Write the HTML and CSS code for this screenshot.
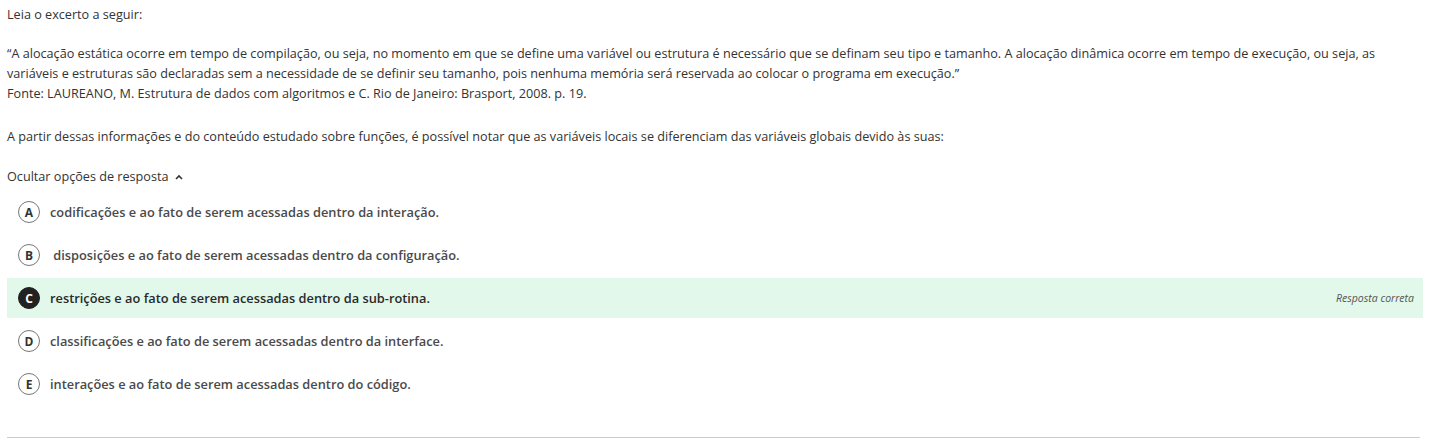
FILE: index.html
```html
<!DOCTYPE html>
<html lang="pt">
<head>
<meta charset="utf-8">
<link rel="stylesheet" href="styles.css">
</head>
<body>
<div class="question">
  <p class="intro">Leia o excerto a seguir:</p>
  <p class="quote">“A alocação estática ocorre em tempo de compilação, ou seja, no momento em que se define uma variável ou estrutura é necessário que se definam seu tipo e tamanho. A alocação dinâmica ocorre em tempo de execução, ou seja, as variáveis e estruturas são declaradas sem a necessidade de se definir seu tamanho, pois nenhuma memória será reservada ao colocar o programa em execução.”<br>Fonte: LAUREANO, M. Estrutura de dados com algoritmos e C. Rio de Janeiro: Brasport, 2008. p. 19.</p>
  <p class="prompt">A partir dessas informações e do conteúdo estudado sobre funções, é possível notar que as variáveis locais se diferenciam das variáveis globais devido às suas:</p>
  <div class="toggle">Ocultar opções de resposta <svg class="chev" width="8" height="6" viewBox="0 0 8 6"><path d="M1 5 L4 2 L7 5" fill="none" stroke="#333" stroke-width="1.6"/></svg></div>
  <ul class="options">
    <li class="opt"><span class="letter">A</span><span class="text">codificações e ao fato de serem acessadas dentro da interação.</span></li>
    <li class="opt"><span class="letter">B</span><span class="text">&nbsp;disposições e ao fato de serem acessadas dentro da configuração.</span></li>
    <li class="opt correct"><span class="letter">C</span><span class="text">restrições e ao fato de serem acessadas dentro da sub-rotina.</span><span class="tag">Resposta correta</span></li>
    <li class="opt"><span class="letter">D</span><span class="text">classificações e ao fato de serem acessadas dentro da interface.</span></li>
    <li class="opt"><span class="letter">E</span><span class="text">interações e ao fato de serem acessadas dentro do código.</span></li>
  </ul>
  <hr class="rule">
</div>
</body>
</html>
```

FILE: styles.css
```css
html, body {
  margin: 0;
  padding: 0;
  background: #fff;
}
body {
  font-family: "Open Sans", "DejaVu Sans", sans-serif;
  font-size: 12.65px;
  color: #333;
}
.question {
  padding: 4px 10px 0 7px;
}
.question p {
  margin: 0;
  line-height: 20px;
}
.intro {
  margin-bottom: 19px !important;
}
.quote {
  margin-bottom: 23px !important;
}
.prompt {
  margin-bottom: 20px !important;
}
.toggle {
  line-height: 20px;
  display: flex;
  align-items: center;
  gap: 6px;
}
.chev {
  margin-top: 1px;
}
.options {
  list-style: none;
  margin: 6px 0 0;
  padding: 0;
}
.opt {
  display: flex;
  align-items: center;
  height: 40px;
  margin-bottom: 3px;
  padding: 0 9px 0 11px;
  font-size: 12.8px;
  font-weight: 600;
  color: #4a4a4a;
}
.letter {
  width: 20px;
  height: 20px;
  border: 1px solid #777;
  border-radius: 50%;
  display: flex;
  align-items: center;
  justify-content: center;
  font-size: 12px;
  font-weight: 700;
  color: #333;
  margin-right: 10px;
  flex: none;
}
.correct {
  background: #e1f8ea;
  color: #2a2a2a;
}
.correct .letter {
  background: #222;
  border-color: #222;
  color: #fff;
}
.tag {
  margin-left: auto;
  font-size: 10.5px;
  font-weight: 400;
  font-style: italic;
  color: #555;
}
.rule {
  border: 0;
  border-top: 1px solid #ccc;
  margin: 33px 3px 0 0;
}
```
